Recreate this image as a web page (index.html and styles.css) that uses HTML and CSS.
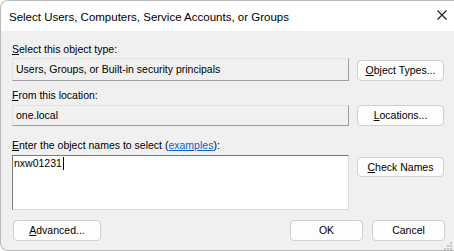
FILE: index.html
```html
<!DOCTYPE html>
<html>
<head>
<meta charset="utf-8">
<link rel="stylesheet" href="styles.css">
</head>
<body>
<div class="window">
  <div class="titlebar">
    <span class="title">Select Users, Computers, Service Accounts, or Groups</span>
    <svg class="close" width="10" height="10" viewBox="0 0 10 10"><path d="M0.5 0.5L9.5 9.5M9.5 0.5L0.5 9.5" stroke="#1b1b1b" stroke-width="1.1" fill="none"/></svg>
  </div>
  <div class="content">
    <div class="label l1"><u>S</u>elect this object type:</div>
    <div class="row r1">
      <div class="field f1">Users, Groups, or Built-in security principals</div>
      <button class="btn side"><u>O</u>bject Types...</button>
    </div>
    <div class="label l2"><u>F</u>rom this location:</div>
    <div class="row r2">
      <div class="field f2">one.local</div>
      <button class="btn side"><u>L</u>ocations...</button>
    </div>
    <div class="label l3"><u>E</u>nter the object names to select (<a class="link">examples</a>):</div>
    <div class="row r3">
      <div class="names">nxw01231<span class="caret"></span></div>
      <button class="btn side"><u>C</u>heck Names</button>
    </div>
    <div class="footer">
      <button class="btn adv"><u>A</u>dvanced...</button>
      <div class="spacer"></div>
      <button class="btn ok">OK</button>
      <button class="btn cancel">Cancel</button>
    </div>
  </div>
  <div class="grip">
    <i class="d d1"></i><i class="d d2"></i><i class="d d3"></i><i class="d d4"></i><i class="d d5"></i><i class="d d6"></i>
  </div>
</div>
</body>
</html>
```
FILE: styles.css
```css
* { box-sizing: border-box; }
html, body { margin: 0; padding: 0; }
body {
  width: 454px;
  height: 251px;
  overflow: hidden;
  background: #ffffff;
  font-family: "Liberation Sans", Arial, sans-serif;
  font-size: 10.5px;
  color: #000;
}
.window {
  position: relative;
  width: 460px;
  height: 251px;
  border: 1px solid #b9b9b9;
  border-right: none;
  border-radius: 8px 0 0 8px;
  background: #f0f0f0;
  overflow: hidden;
  display: flex;
  flex-direction: column;
}
.titlebar {
  height: 30px;
  flex: none;
  background: #ffffff;
  display: flex;
  align-items: center;
  padding-left: 8px;
  position: relative;
}
.title {
  font-size: 11.5px;
  color: #000;
  margin-top: 1px;
}
.close {
  position: absolute;
  left: 436px;
  top: 9px;
}
.content {
  flex: 1;
  padding: 11px 0 0 11px;
  display: flex;
  flex-direction: column;
  width: 454px;
}
.label {
  height: 14px;
  line-height: 14px;
  white-space: nowrap;
}
.row {
  display: flex;
  align-items: flex-start;
}
.r1 { margin-top: 2px; }
.l2 { margin-top: 7px; }
.r2 { margin-top: 3px; }
.l3 { margin-top: 12px; }
.r3 { margin-top: 3px; }
.field {
  width: 337px;
  height: 23px;
  border: 1px solid;
  border-color: #e2e2e2 #a0a0a0 #a0a0a0 #e2e2e2;
  background: #f0f0f0;
  padding: 0 3px;
  line-height: 21px;
  white-space: nowrap;
}
.f2 { height: 21px; line-height: 19px; }
.btn {
  font-family: "Liberation Sans", Arial, sans-serif;
  font-size: 10.5px;
  color: #000;
  background: #fdfdfd;
  border: 1px solid #d0d0d0;
  border-radius: 4px;
  height: 21px;
  padding: 0;
  line-height: 19px;
}
.side {
  width: 87px;
  margin-left: 8px;
}
.r1 .side { margin-top: 2px; }
.r3 .side { margin-top: 2px; height: 20px; }
.names {
  width: 337px;
  height: 55px;
  background: #ffffff;
  border: 1px solid;
  border-color: #7a7a7a #dadada #dadada #7a7a7a;
  padding: 1px 1px;
  line-height: 13px;
}
.caret {
  display: inline-block;
  width: 1px;
  height: 13px;
  background: #000;
  vertical-align: top;
  margin-left: 1px;
}
.link {
  color: #0066cc;
  text-decoration: underline;
}
.footer {
  display: flex;
  margin-top: 10px;
  width: 433px;
}
.adv { width: 88px; height: 21px; margin-left: 1px; }
.spacer { flex: 1; }
.ok { width: 73px; }
.cancel { width: 73px; margin-left: 9px; }
.grip {
  position: absolute;
  left: 443px;
  top: 241px;
  width: 11px;
  height: 9px;
}
.d {
  position: absolute;
  width: 2px;
  height: 2px;
  background: #c4c4c4;
}
.d1 { left: 6px; top: 0; }
.d2 { left: 3px; top: 3px; }
.d3 { left: 6px; top: 3px; }
.d4 { left: 0; top: 6px; }
.d5 { left: 3px; top: 6px; }
.d6 { left: 6px; top: 6px; }
```
